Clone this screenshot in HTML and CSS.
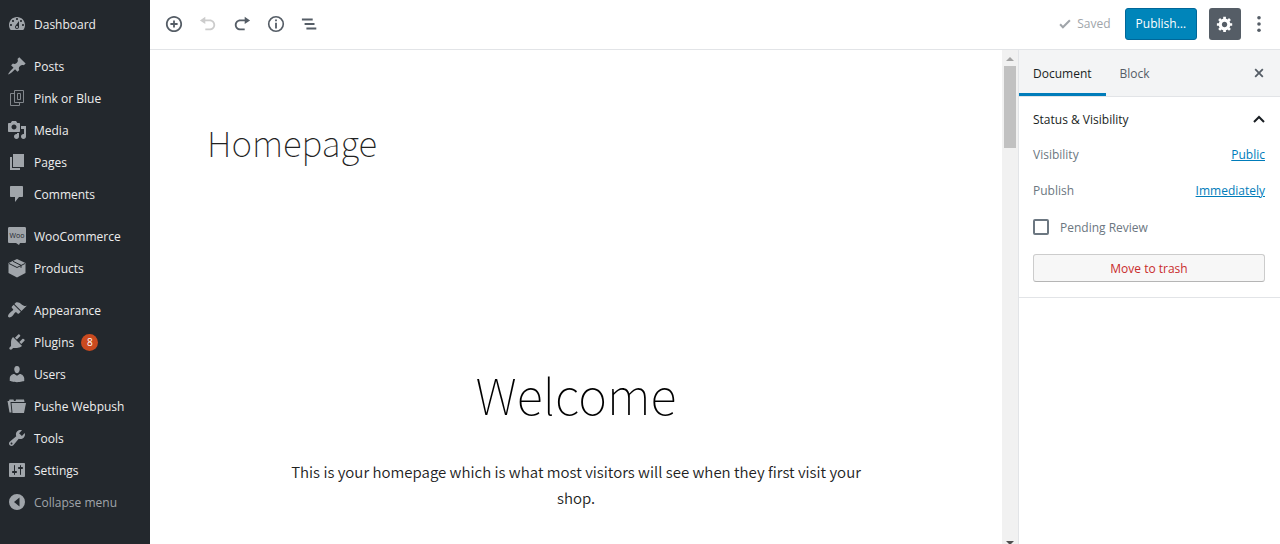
FILE: index.html
```html
<!DOCTYPE html>
<html lang="en">
<head>
    <meta charset="UTF-8">
    <meta name="viewport" content="width=device-width, initial-scale=1.0">
    <title>Edit Page</title>

    <link rel="stylesheet" href="styles.css">
</head>
<body>

<nav class="admin-menu">
    <ul>
        <li><a href="#"><svg viewBox="0 0 20 20"><path fill-rule="evenodd" d="M3.76 16h12.48c1.1-1.37 1.76-3.11 1.76-5 0-4.42-3.58-8-8-8s-8 3.58-8 8c0 1.89.66 3.63 1.76 5zM10 4c.55 0 1 .45 1 1s-.45 1-1 1-1-.45-1-1 .45-1 1-1zM6 6c.55 0 1 .45 1 1s-.45 1-1 1-1-.45-1-1 .45-1 1-1zm8 0c.55 0 1 .45 1 1s-.45 1-1 1-1-.45-1-1 .45-1 1-1zm-5.37 5.55L12 7v6c0 1.1-.9 2-2 2s-2-.9-2-2c0-.57.24-1.08.63-1.45zM4 10c.55 0 1 .45 1 1s-.45 1-1 1-1-.45-1-1 .45-1 1-1zm12 0c.55 0 1 .45 1 1s-.45 1-1 1-1-.45-1-1 .45-1 1-1zm-5 3c0-.55-.45-1-1-1s-1 .45-1 1 .45 1 1 1 1-.45 1-1z"/></svg>Dashboard</a></li>
        <li class="group"><a href="#"><svg viewBox="0 0 20 20"><path d="M10.44 3.02l1.82-1.82 6.36 6.35-1.83 1.82c-1.05-.68-2.48-.57-3.41.36l-.75.75c-.92.93-1.04 2.35-.35 3.41l-1.83 1.82-2.41-2.41-2.8 2.79c-.42.42-3.38 2.71-3.8 2.29s1.86-3.39 2.28-3.81l2.79-2.79L4.1 9.36l1.83-1.82c1.05.69 2.48.57 3.4-.36l.75-.75c.93-.92 1.05-2.35.36-3.41z"/></svg>Posts</a></li>
        <li><a href="#"><svg viewBox="0 0 20 20"><path class="line" d="M7.500 2.500h9v12h-9zM7 5.500H3.500v12h9V15M10.500 5.500h3v6h-3z"/></svg>Pink or Blue</a></li>
        <li><a href="#"><svg viewBox="0 0 20 20"><path fill-rule="evenodd" d="M13 11V4c0-.55-.45-1-1-1h-1.67L9 1H5L3.67 3H2c-.55 0-1 .45-1 1v7c0 .55.45 1 1 1h10c.55 0 1-.45 1-1zM7 4.500c1.380 0 2.500 1.120 2.500 2.500S8.380 9.500 7 9.500 4.500 8.380 4.500 7 5.620 4.500 7 4.500zM14 6h5v10.500c0 1.380-1.120 2.500-2.500 2.500S14 17.880 14 16.500s1.120-2.500 2.500-2.500c.17 0 .34.02.5.05V9h-3V6zm-4 8.050V13h2v3.500c0 1.380-1.120 2.500-2.500 2.500S7 17.880 7 16.500 8.120 14 9.500 14c.17 0 .34.02.5.05z"/></svg>Media</a></li>
        <li><a href="#"><svg viewBox="0 0 20 20"><path d="M6 15V2h11v13H6zm-1 1h8v2H3V5h2v11z"/></svg>Pages</a></li>
        <li><a href="#"><svg viewBox="0 0 20 20"><path d="M4 2h11c.6 0 1 .4 1 1v9c0 .6-.4 1-1 1h-3l-4 5v-5H4c-.6 0-1-.4-1-1V3c0-.6.4-1 1-1z"/></svg>Comments</a></li>
        <li class="group"><a href="#"><svg viewBox="0 0 20 20"><path d="M2.500 1h15C18.500 1 19 1.500 19 2.500v13c0 1-.5 1.500-1.500 1.500H13l-1 2-3-2H2.500C1.500 17 1 16.500 1 15.500v-13C1 1.500 1.500 1 2.500 1z"/><text class="woo" x="10" y="12" text-anchor="middle">Woo</text></svg>WooCommerce</a></li>
        <li><a href="#"><svg viewBox="0 0 20 20"><path d="M10 1l8.500 4v10L10 19.500 1.500 15V5z"/><path class="cut" d="M2 5.500l8 4 8-4M6 3.300l8 4v2.500"/></svg>Products</a></li>
        <li class="group"><a href="#"><svg viewBox="0 0 20 20"><path d="M14.48 11.06L7.41 3.99l1.5-1.5c.5-.56 2.3-.47 3.51.32 1.21.8 1.43 1.28 2.91 2.1 1.18.64 2.45 1.26 4.45.85zm-.71.71L6.7 4.7 4.93 6.47c-.39.39-.39 1.02 0 1.41l1.06 1.06c.39.39.39 1.03 0 1.42-.6.6-1.43 1.11-2.21 1.69-.35.26-.7.53-1.01.84C1.43 14.23.4 16.08 1.4 17.07c.99 1 2.84-.03 4.18-1.36.31-.31.58-.66.85-1.02.57-.78 1.08-1.61 1.69-2.21.39-.39 1.02-.39 1.41 0l1.06 1.06c.39.39 1.02.39 1.41 0z"/></svg>Appearance</a></li>
        <li><a href="#"><svg viewBox="0 0 20 20"><path d="M13.11 4.36L9.87 7.6 8 5.73l3.24-3.24c.35-.34 1.05-.2 1.56.32.52.51.66 1.21.31 1.55zm-8 1.77l.91-1.12 9.01 9.01-1.19.84c-.71.71-2.63 1.16-3.82 1.16H6.14L4.9 17.26c-.59.59-1.54.59-2.12 0-.59-.58-.59-1.53 0-2.12l1.24-1.24v-3.88c0-1.13.4-3.19 1.09-3.89zm7.26 3.97l3.24-3.24c.34-.35 1.04-.21 1.55.31.52.51.66 1.21.31 1.55l-3.24 3.25z"/></svg>Plugins<span class="count">8</span></a></li>
        <li><a href="#"><svg viewBox="0 0 20 20"><path d="M10 9.25c-2.27 0-2.73-3.44-2.73-3.44C7 4.02 7.82 2 9.97 2c2.16 0 2.98 2.02 2.71 3.81 0 0-.41 3.44-2.68 3.44zm0 2.57L12.72 10c2.39 0 4.52 2.33 4.52 4.53v2.49s-3.65 1.13-7.24 1.13c-3.65 0-7.24-1.13-7.24-1.13v-2.49c0-2.25 1.94-4.48 4.47-4.48z"/></svg>Users</a></li>
        <li><a href="#"><svg viewBox="0 0 20 20"><path d="M4.500 7H19l-2 10H5.500z"/><path d="M.5 5H2l.5-1.500h4L7 5h1.500L9 3.500h8l.5 2.500h-14l1 10.500H2.500z"/></svg>Pushe Webpush</a></li>
        <li><a href="#"><svg viewBox="0 0 20 20"><path fill-rule="evenodd" d="M16.68 9.77c-1.34 1.34-3.3 1.67-4.95.99l-5.41 6.52c-.99.99-2.59.99-3.58 0s-.99-2.59 0-3.57l6.52-5.42c-.68-1.65-.35-3.61.99-4.95 1.28-1.28 3.12-1.62 4.72-1.06l-2.89 2.89 2.82 2.82 2.86-2.87c.53 1.58.18 3.39-1.08 4.65zM3.81 16.21c.4.39 1.04.39 1.43 0 .4-.4.4-1.04 0-1.43-.39-.4-1.03-.4-1.43 0-.39.39-.39 1.03 0 1.43z"/></svg>Tools</a></li>
        <li><a href="#"><svg viewBox="0 0 20 20"><path fill-rule="evenodd" d="M18 16V4c0-.55-.45-1-1-1H3c-.55 0-1 .45-1 1v12c0 .55.45 1 1 1h14c.55 0 1-.45 1-1zM8 11h1c.55 0 1 .45 1 1s-.45 1-1 1H8v1.500c0 .28-.22.5-.5.5s-.5-.22-.5-.5V13H6c-.55 0-1-.45-1-1s.45-1 1-1h1V5.500c0-.28.22-.5.5-.5s.5.22.5.5V11zm5-2h-1c-.55 0-1-.45-1-1s.45-1 1-1h1V5.500c0-.28.22-.5.5-.5s.5.22.5.5V7h1c.55 0 1 .45 1 1s-.45 1-1 1h-1v5.500c0 .28-.22.5-.5.5s-.5-.22-.5-.5V9z"/></svg>Settings</a></li>
        <li><button class="collapse"><svg viewBox="0 0 20 20"><path fill-rule="evenodd" d="M10 2a8 8 0 1 0 0 16 8 8 0 0 0 0-16zM12.500 5.500v9L7 10z"/></svg>Collapse menu</button></li>
    </ul>
</nav>

<div class="editor">
    <header class="toolbar">
        <button aria-label="Add block"><svg viewBox="0 0 20 20"><path d="M10 1c-5 0-9 4-9 9s4 9 9 9 9-4 9-9-4-9-9-9zm0 16c-3.900 0-7-3.100-7-7s3.100-7 7-7 7 3.100 7 7-3.100 7-7 7zm1-11H9v3H6v2h3v3h2v-3h3V9h-3V6z"/></svg></button>
        <button aria-label="Undo" disabled><svg viewBox="0 0 20 20"><path d="M12 5H7V2L1 6l6 4V7h5c2.200 0 4 1.800 4 4s-1.800 4-4 4H7v2h5c3.300 0 6-2.700 6-6s-2.700-6-6-6z"/></svg></button>
        <button aria-label="Redo"><svg viewBox="0 0 20 20"><path d="M8 5h5V2l6 4-6 4V7H8c-2.200 0-4 1.800-4 4s1.800 4 4 4h5v2H8c-3.300 0-6-2.700-6-6s2.700-6 6-6z"/></svg></button>
        <button aria-label="Content structure"><svg viewBox="0 0 20 20"><path fill-rule="evenodd" d="M10 1a9 9 0 1 0 0 18 9 9 0 0 0 0-18zm0 1.800a7.200 7.200 0 1 1 0 14.400 7.200 7.200 0 0 1 0-14.400zM9 5h2v2H9zM9 8.500h2V15H9z"/></svg></button>
        <button aria-label="Block navigation"><svg viewBox="0 0 20 20"><path d="M1 4h12v2H1zM4 9h11v2H4zM6 14h11v2H6z"/></svg></button>

        <span class="saved"><svg viewBox="0 0 20 20"><path d="M3 10.500l4 4 10-10" /></svg>Saved</span>
        <button class="publish">Publish…</button>
        <button class="settings" aria-label="Settings"><svg viewBox="0 0 20 20"><path fill-rule="evenodd" d="M18 12h-2.18c-.17.7-.44 1.35-.81 1.93l1.54 1.54-2.1 2.1-1.54-1.54c-.58.36-1.23.63-1.91.79V19H8v-2.18c-.68-.16-1.33-.43-1.91-.79l-1.54 1.54-2.12-2.12 1.54-1.54c-.36-.58-.63-1.23-.79-1.91H1V9.03h2.17c.16-.7.44-1.35.8-1.94L2.43 5.55l2.1-2.1 1.54 1.54c.58-.37 1.24-.64 1.93-.81V2h3v2.18c.68.16 1.33.43 1.91.79l1.54-1.54 2.12 2.12-1.54 1.54c.36.59.64 1.24.8 1.94H18V12zm-8.5 1.5c1.66 0 3-1.34 3-3s-1.34-3-3-3-3 1.34-3 3 1.34 3 3 3z"/></svg></button>
        <button class="more" aria-label="More tools"><svg viewBox="0 0 20 20"><circle cx="10" cy="3" r="2"/><circle cx="10" cy="10" r="2"/><circle cx="10" cy="17" r="2"/></svg></button>
    </header>

    <div class="workspace">
        <main class="canvas">
            <h1>Homepage</h1>
            <div class="blocks">
                <h2>Welcome</h2>
                <p>This is your homepage which is what most visitors will see when they first visit your shop.</p>
                <p>You can change this text by editing the "Welcome" page via the "Pages" menu in your dashboard.</p>
            </div>
        </main>

        <div class="scrollbar">
            <svg viewBox="0 0 10 10"><path d="M1 7l4-4 4 4z"/></svg>
            <div class="thumb"></div>
            <svg class="down" viewBox="0 0 10 10"><path d="M1 7h8l-4 4z"/></svg>
        </div>

        <aside class="inspector">
            <div class="tabs">
                <button class="active">Document</button>
                <button>Block</button>
                <button class="close" aria-label="Close settings"><svg viewBox="0 0 20 20"><path d="M14.95 6.46L11.41 10l3.54 3.54-1.41 1.41L10 11.42l-3.53 3.53-1.42-1.42L8.58 10 5.05 6.47l1.42-1.42L10 8.58l3.54-3.53z"/></svg></button>
            </div>
            <section class="panel">
                <button class="panel-title">Status &amp; Visibility<svg viewBox="0 0 12 12"><path d="M1 9l5-5 5 5"/></svg></button>
                <div class="row"><span>Visibility</span><a href="#">Public</a></div>
                <div class="row"><span>Publish</span><a href="#">Immediately</a></div>
                <div class="check"><input type="checkbox" id="pending"><label for="pending">Pending Review</label></div>
                <button class="trash">Move to trash</button>
            </section>
        </aside>
    </div>
</div>

</body>
</html>
```
FILE: styles.css
```css
* {
    box-sizing: border-box;
}
body {
    margin: 0;
    height: 100vh;
    display: flex;
    overflow: hidden;
    background: #fff;
    font-family: "Open Sans", "Noto Sans", sans-serif;
    font-size: 12px;
    color: #555d66;
}
button {
    font: inherit;
    color: inherit;
    background: none;
    border: none;
    padding: 0;
    cursor: pointer;
}
svg {
    display: block;
    flex: none;
    fill: currentColor;
}

/* left menu */
.admin-menu {
    width: 150px;
    flex: none;
    background: #23282d;
    font-weight: 500;
}
.admin-menu ul {
    list-style: none;
    margin: 0;
    padding: 8px 0;
}
.admin-menu .group {
    margin-top: 10px;
}
.admin-menu a,
.collapse {
    display: flex;
    align-items: center;
    gap: 7px;
    width: 100%;
    height: 32px;
    padding-left: 7px;
    color: #eee;
    text-decoration: none;
    white-space: nowrap;
}
.admin-menu .collapse {
    color: #a0a5aa;
    font-weight: 400;
}
.admin-menu svg {
    width: 20px;
    height: 20px;
    fill: #a0a5aa;
}
.admin-menu .line {
    fill: none;
    stroke: #82878c;
}
.admin-menu .cut {
    fill: none;
    stroke: #23282d;
}
.admin-menu .woo {
    fill: #23282d;
    font-size: 7px;
}
.count {
    width: 17px;
    height: 17px;
    border-radius: 50%;
    background: #ca4a1f;
    color: #fff;
    font-size: 10px;
    line-height: 17px;
    text-align: center;
}

.editor {
    flex: 1;
    min-width: 0;
    display: flex;
    flex-direction: column;
}

/* top bar */
.toolbar {
    display: flex;
    align-items: center;
    height: 50px;
    flex: none;
    padding: 0 12px 2px 7px;
    border-bottom: 1px solid #e2e4e7;
}
.toolbar button {
    width: 34px;
    height: 32px;
    display: flex;
    align-items: center;
    justify-content: center;
}
.toolbar svg {
    width: 18px;
    height: 18px;
}
.toolbar button:disabled {
    color: #ccc;
}
.saved {
    display: flex;
    align-items: center;
    gap: 5px;
    margin-left: auto;
    color: #a0a5aa;
}
.toolbar .saved svg {
    width: 14px;
    height: 14px;
    fill: none;
    stroke: currentColor;
    stroke-width: 3;
}
.toolbar .publish {
    width: auto;
    margin: 0 12px 0 14px;
    padding: 0 10px;
    border: 1px solid #006799;
    border-radius: 3px;
    background: #0085ba;
    color: #fff;
}
.toolbar .settings {
    width: 32px;
    border-radius: 3px;
    background: #555d66;
    color: #fff;
}
.toolbar .more {
    width: 18px;
    margin-left: 9px;
}

.workspace {
    flex: 1;
    min-height: 0;
    display: flex;
}

/* page content */
.canvas {
    flex: 1;
    min-width: 0;
    overflow: hidden;
    padding: 62px 57px 0;
    font-family: "Noto Sans CJK SC", sans-serif;
    color: #222;
}
.canvas h1 {
    margin: 0;
    font-size: 35px;
    line-height: 60px;
    font-weight: 100;
}
.blocks {
    max-width: 590px;
    margin: 183px auto 0;
    text-align: center;
}
.blocks h2 {
    margin: 0 0 26px;
    font-size: 49px;
    line-height: 78px;
    font-weight: 100;
    color: #000;
}
.blocks p {
    margin: 0 0 30px;
    font-size: 15px;
    line-height: 26px;
    font-weight: 350;
}

.scrollbar {
    width: 16px;
    flex: none;
    display: flex;
    flex-direction: column;
    align-items: center;
    padding-top: 4px;
    background: #f1f1f1;
}
.scrollbar svg {
    width: 10px;
    height: 10px;
    fill: #a3a3a3;
}
.thumb {
    width: 12px;
    height: 82px;
    margin-top: 2px;
    background: #c1c1c1;
}
.scrollbar .down {
    margin-top: auto;
    fill: #505050;
}

/* document settings */
.inspector {
    width: 262px;
    flex: none;
    border-left: 1px solid #e2e4e7;
}
.tabs {
    display: flex;
    height: 47px;
    padding-right: 12px;
    background: #f3f4f5;
    border-bottom: 1px solid #e2e4e7;
}
.tabs button {
    padding: 0 14px;
}
.tabs .active {
    border-bottom: 3px solid #007cba;
    padding-top: 3px;
    color: #191e23;
    font-weight: 500;
}
.tabs .close {
    margin-left: auto;
    padding: 0;
}
.close svg {
    width: 18px;
    height: 18px;
}
.panel {
    padding: 0 15px 15px 14px;
    border-bottom: 1px solid #e2e4e7;
    color: #6c7781;
}
.panel-title {
    display: flex;
    align-items: center;
    justify-content: space-between;
    width: 100%;
    height: 46px;
    padding-bottom: 2px;
    color: #191e23;
    font-weight: 500;
}
.panel-title svg {
    width: 12px;
    height: 12px;
    fill: none;
    stroke: currentColor;
    stroke-width: 2;
}
.row {
    display: flex;
    justify-content: space-between;
    line-height: 24px;
    margin-bottom: 12px;
}
.row a {
    color: #007cba;
}
.check {
    display: flex;
    align-items: center;
    gap: 11px;
    height: 24px;
    margin: 1px 0 15px;
}
.check input {
    appearance: none;
    width: 16px;
    height: 16px;
    margin: 0;
    border: 2px solid #6c7781;
    border-radius: 2px;
}
.trash {
    width: 100%;
    height: 28px;
    border: 1px solid #ccc;
    border-bottom-color: #b5b5b5;
    border-radius: 3px;
    background: #f7f7f7;
    color: #c92c2c;
}
```
